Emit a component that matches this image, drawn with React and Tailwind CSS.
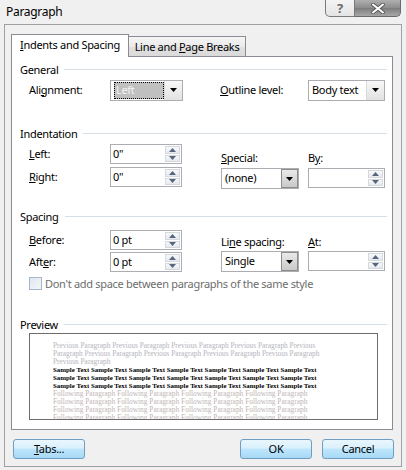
import React from "react";

function Arrow({ up = false, color = "#000", w = 7, h = 4 }) {
  return (
    <svg width={w} height={h} viewBox={`0 0 ${w} ${h}`} className="block">
      {up ? (
        <path d={`M0 ${h}H${w}L${w / 2} 0Z`} fill={color} />
      ) : (
        <path d={`M0 0H${w}L${w / 2} ${h}Z`} fill={color} />
      )}
    </svg>
  );
}

function Spinner({ value, w }) {
  return (
    <div className={`flex h-[20px] border border-[#abadb3] bg-white ${w}`}>
      <div className="flex-1 pl-[2px] leading-[18px]">{value}</div>
      <div className="flex w-[17px] flex-col gap-px p-px">
        <div className="flex flex-1 items-center justify-center border border-[#d5d9de] bg-[linear-gradient(#f7f8f9,#e6e9ee)]">
          <Arrow up color="#56667f" w={7} h={4} />
        </div>
        <div className="flex flex-1 items-center justify-center border border-[#d5d9de] bg-[linear-gradient(#f7f8f9,#e6e9ee)]">
          <Arrow color="#56667f" w={7} h={4} />
        </div>
      </div>
    </div>
  );
}

function Select({ children, w, dark = false }) {
  return (
    <div className={`flex h-[21px] border border-[#abadb3] bg-white ${w}`}>
      <div className="flex min-w-0 flex-1 items-center whitespace-nowrap pl-[3px]">{children}</div>
      {dark ? (
        <div className="flex w-[17px] items-center justify-center border border-[#8c8c8c] bg-[linear-gradient(#e9e9e9,#c9c9c9)]">
          <Arrow />
        </div>
      ) : (
        <div className="flex w-[18px] items-center justify-center border-l border-[#dadada] bg-[linear-gradient(#f7f7f7,#e2e2e2)]">
          <Arrow />
        </div>
      )}
    </div>
  );
}

function Header({ children }) {
  return (
    <div className="flex h-[15px] items-center pr-[5px]">
      <span className="leading-[15px]">{children}</span>
      <div className="ml-[6px] h-px flex-1 bg-[#d5dfe5]" />
    </div>
  );
}

function Btn({ children, w = "w-[72px]" }) {
  return (
    <div
      className={`flex h-[20px] items-center justify-center rounded-[3px] border border-[#6f9ec2] bg-[linear-gradient(#eaf6fd_0%,#d9f0fc_45%,#bee6fd_50%,#a7d9f5_100%)] ${w}`}
    >
      {children}
    </div>
  );
}

const prevLines = [
  "Previous Paragraph Previous Paragraph Previous Paragraph Previous Paragraph Previous",
  "Paragraph Previous Paragraph Previous Paragraph Previous Paragraph Previous Paragraph",
  "Previous Paragraph",
];
const sampleLine =
  "Sample Text Sample Text Sample Text Sample Text Sample Text Sample Text Sample Text";
const followLine =
  "Following Paragraph Following Paragraph Following Paragraph Following Paragraph";

export default function App() {
  return (
    <div className="relative h-[470px] w-[406px] overflow-hidden bg-[#f0f0f0] font-['Noto_Sans',sans-serif] text-[11px] tracking-[-0.3px] text-black">
      {/* Title bar */}
      <div className="flex h-[24px] items-start justify-between">
        <div className="pl-[6px] pt-[4px] text-[12px] leading-[16px]">Paragraph</div>
        <div className="mr-[5px] flex h-[17px]">
          <div className="flex w-[30px] items-center justify-center rounded-bl-[5px] border border-t-0 border-[#7a7a7a] bg-[linear-gradient(#f4f4f4,#e4e4e4)] text-[13px] font-bold leading-none text-[#6a6a6a]">
            ?
          </div>
          <div className="flex w-[46px] items-center justify-center rounded-br-[5px] border border-l-0 border-t-0 border-[#6a6a6a] bg-[linear-gradient(#b0b0b0,#8c8c8c_50%,#7c7c7c_51%,#a8a8a8)]">
            <svg width="14" height="11" viewBox="0 0 14 11">
              <path d="M2 1.5L12 9.5M12 1.5L2 9.5" stroke="#555" strokeWidth="3.6" strokeLinecap="round" />
              <path d="M2 1.5L12 9.5M12 1.5L2 9.5" stroke="#fff" strokeWidth="2" strokeLinecap="round" />
            </svg>
          </div>
        </div>
      </div>

      {/* Client frame */}
      <div className="mx-[4px] h-[443px] w-[398px] border border-[#a0a0a0] bg-[#f0f0f0] pl-[6px] pt-[9px]">
        {/* Tabs */}
        <div className="relative z-10 flex h-[22px] items-start">
          <div className="flex h-[23px] w-[118px] items-center justify-center whitespace-nowrap border border-b-0 border-[#898c95] bg-white pb-[1px]">
            <span>
              <u>I</u>ndents and Spacing
            </span>
          </div>
          <div className="mt-[2px] flex h-[20px] w-[117px] items-center justify-center whitespace-nowrap border border-b-0 border-l-0 border-[#898c95] bg-[linear-gradient(#f5f5f5,#eaeaea_50%,#e0e0e0_51%,#dadada)] pt-[1px]">
            <span>
              Line and <u>P</u>age Breaks
            </span>
          </div>
        </div>

        {/* Panel */}
        <div className="h-[374px] w-[382px] border border-[#898c95] bg-white pl-[8px]">
          {/* General */}
          <div className="mt-[5px]">
            <Header>General</Header>
          </div>
          <div className="mt-[2px] flex h-[22px] items-center pl-[9px]">
            <div className="w-[81px]">
              Ali<u>g</u>nment:
            </div>
            <Select w="w-[73px]">
              <div className="flex h-[17px] w-[52px] items-center border border-dotted border-black bg-[#c0c0c0] pl-[1px] text-[#f4f4f4]">
                Left
              </div>
            </Select>
            <div className="ml-[37px] w-[88px]">
              <u>O</u>utline level:
            </div>
            <Select w="w-[77px]">Body text</Select>
          </div>

          {/* Indentation */}
          <div className="mt-[25px]">
            <Header>Indentation</Header>
          </div>
          <div className="mt-[3px] flex pl-[9px]">
            <div className="flex w-[192px] flex-col gap-[3px]">
              <div className="flex items-center">
                <div className="w-[81px]">
                  <u>L</u>eft:
                </div>
                <Spinner value={'0"'} w="w-[72px]" />
              </div>
              <div className="flex items-center">
                <div className="w-[81px]">
                  <u>R</u>ight:
                </div>
                <Spinner value={'0"'} w="w-[72px]" />
              </div>
            </div>
            <div className="flex w-[87px] flex-col pt-[6px]">
              <div className="leading-[15px]">
                <u>S</u>pecial:
              </div>
              <div className="mt-[3px]">
                <Select w="w-[78px]" dark>
                  (none)
                </Select>
              </div>
            </div>
            <div className="flex w-[77px] flex-col pt-[6px]">
              <div className="leading-[15px]">
                B<u>y</u>:
              </div>
              <div className="mt-[3px]">
                <Spinner value="" w="w-[77px]" />
              </div>
            </div>
          </div>

          {/* Spacing */}
          <div className="mt-[20px]">
            <Header>Spacing</Header>
          </div>
          <div className="mt-[6px] flex pl-[9px]">
            <div className="flex w-[192px] flex-col gap-[2px]">
              <div className="flex items-center">
                <div className="w-[81px]">
                  <u>B</u>efore:
                </div>
                <Spinner value="0 pt" w="w-[72px]" />
              </div>
              <div className="flex items-center">
                <div className="w-[81px]">
                  Aft<u>e</u>r:
                </div>
                <Spinner value="0 pt" w="w-[72px]" />
              </div>
            </div>
            <div className="flex w-[87px] flex-col pt-[4px]">
              <div className="leading-[15px]">
                Li<u>n</u>e spacing:
              </div>
              <div className="mt-[2px]">
                <Select w="w-[78px]" dark>
                  Single
                </Select>
              </div>
            </div>
            <div className="flex w-[77px] flex-col pt-[4px]">
              <div className="leading-[15px]">
                <u>A</u>t:
              </div>
              <div className="mt-[2px]">
                <Spinner value="" w="w-[77px]" />
              </div>
            </div>
          </div>
          <div className="mt-[4px] flex items-center pl-[9px] text-[#6d6d6d]">
            <div className="h-[13px] w-[13px] border border-[#a7b7c9] bg-[linear-gradient(135deg,#dfe6ee,#f4f7fa)]" />
            <span className="ml-[3px] leading-[15px]">
              Don't add space between paragraphs of the same style
            </span>
          </div>

          {/* Preview */}
          <div className="mt-[26px]">
            <Header>Preview</Header>
          </div>
          <div className="ml-[9px] mt-[1px] h-[87px] w-[349px] overflow-hidden border border-[#6d6d6d] bg-white pl-[23px] pt-[8px] font-['Liberation_Serif',serif] tracking-normal">
            {prevLines.map((l, i) => (
              <div key={"p" + i} className="h-[8px] whitespace-nowrap text-[7.35px] leading-[8px] text-[#b4b4bc]">
                {l}
              </div>
            ))}
            {[0, 1, 2].map((i) => (
              <div key={"s" + i} className="h-[8px] whitespace-nowrap text-[6.9px] font-bold leading-[8px] text-black">
                {sampleLine}
              </div>
            ))}
            {[0, 1, 2, 3].map((i) => (
              <div key={"f" + i} className="h-[8px] whitespace-nowrap text-[7.4px] leading-[8px] text-[#c0b4b4]">
                {followLine}
              </div>
            ))}
          </div>
        </div>

        {/* Buttons */}
        <div className="mt-[9px] flex pr-[7px]">
          <div className="ml-[2px]">
            <Btn>
              <span>
                <u>T</u>abs...
              </span>
            </Btn>
          </div>
          <div className="flex-1" />
          <Btn>OK</Btn>
          <div className="ml-[10px]">
            <Btn>Cancel</Btn>
          </div>
        </div>
      </div>
    </div>
  );
}
